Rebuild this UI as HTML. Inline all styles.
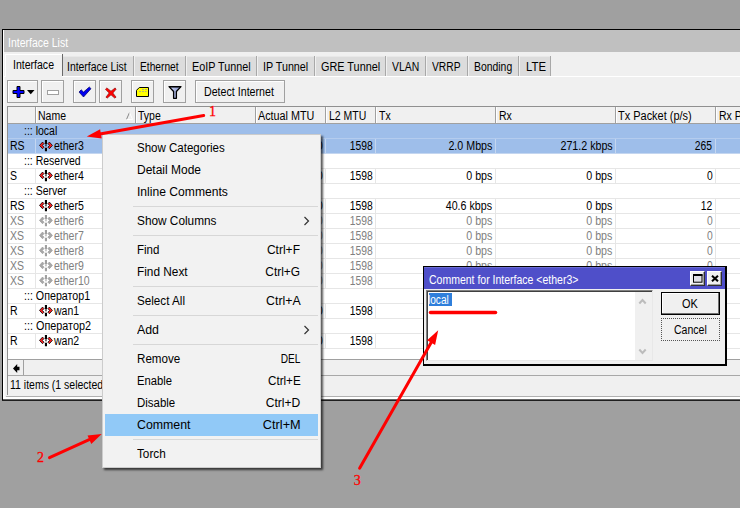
<!DOCTYPE html><html><head><meta charset="utf-8"><title>Interface List</title><style>
html,body{margin:0;padding:0}
body{width:740px;height:508px;overflow:hidden;background:#a0a0a0;position:relative;font:12px/14px "Liberation Sans","Noto Sans CJK SC",sans-serif;color:#000}
div,span,svg{position:absolute;box-sizing:border-box}
.t{white-space:nowrap;transform:scaleX(.875);transform-origin:0 0;line-height:14px;font-size:12px}
.m{white-space:nowrap;transform:scaleX(.96);transform-origin:0 0;line-height:14px;font-size:12px}
.n{white-space:nowrap;font:14px/14px "Liberation Serif",serif;color:#f00;-webkit-text-stroke:.3px #f00}
</style></head><body>
<div style="left:2px;top:29px;width:760px;height:371px;background:#000;"></div>
<div style="left:3px;top:30px;width:760px;height:370px;background:#f0f0f0;"></div>
<div style="left:3px;top:30px;width:1px;height:370px;background:#fff;"></div>
<div style="left:4px;top:52px;width:1px;height:348px;background:#f8f8f8;"></div>
<div style="left:7px;top:106px;width:1px;height:289px;background:#909090;"></div>
<div style="left:4px;top:30px;width:760px;height:22px;background:#c0c0c0;"></div>
<span class="t" style="top:36px;left:8px;color:#fff;">Interface List</span>
<div style="left:4px;top:52px;width:760px;height:25px;background:#f0f0f0;"></div>
<div style="left:4px;top:76px;width:760px;height:1px;background:#fff;"></div>
<div style="left:63px;top:56px;width:70px;height:20px;background:#dcdcdc;border-top:1px solid #e8e8e8;"></div>
<div style="left:133px;top:56px;width:1px;height:20px;background:#a8a8a8;"></div>
<span class="t" style="top:60px;left:67.3px;transform:scaleX(0.8675);">Interface List</span>
<div style="left:135px;top:56px;width:50px;height:20px;background:#dcdcdc;border-top:1px solid #e8e8e8;"></div>
<div style="left:185px;top:56px;width:1px;height:20px;background:#a8a8a8;"></div>
<span class="t" style="top:60px;left:140.4px;transform:scaleX(0.8507);">Ethernet</span>
<div style="left:187px;top:56px;width:69px;height:20px;background:#dcdcdc;border-top:1px solid #e8e8e8;"></div>
<div style="left:256px;top:56px;width:1px;height:20px;background:#a8a8a8;"></div>
<span class="t" style="top:60px;left:192px;transform:scaleX(0.8992);">EoIP Tunnel</span>
<div style="left:258px;top:56px;width:56px;height:20px;background:#dcdcdc;border-top:1px solid #e8e8e8;"></div>
<div style="left:314px;top:56px;width:1px;height:20px;background:#a8a8a8;"></div>
<span class="t" style="top:60px;left:262.9px;transform:scaleX(0.8953);">IP Tunnel</span>
<div style="left:316px;top:56px;width:69px;height:20px;background:#dcdcdc;border-top:1px solid #e8e8e8;"></div>
<div style="left:385px;top:56px;width:1px;height:20px;background:#a8a8a8;"></div>
<span class="t" style="top:60px;left:320.5px;transform:scaleX(0.9055);">GRE Tunnel</span>
<div style="left:387px;top:56px;width:38px;height:20px;background:#dcdcdc;border-top:1px solid #e8e8e8;"></div>
<div style="left:425px;top:56px;width:1px;height:20px;background:#a8a8a8;"></div>
<span class="t" style="top:60px;left:392.2px;transform:scaleX(0.8674);">VLAN</span>
<div style="left:427px;top:56px;width:40px;height:20px;background:#dcdcdc;border-top:1px solid #e8e8e8;"></div>
<div style="left:467px;top:56px;width:1px;height:20px;background:#a8a8a8;"></div>
<span class="t" style="top:60px;left:432.3px;transform:scaleX(0.8547);">VRRP</span>
<div style="left:469px;top:56px;width:49px;height:20px;background:#dcdcdc;border-top:1px solid #e8e8e8;"></div>
<div style="left:518px;top:56px;width:1px;height:20px;background:#a8a8a8;"></div>
<span class="t" style="top:60px;left:474.4px;transform:scaleX(0.8673);">Bonding</span>
<div style="left:520px;top:56px;width:30px;height:20px;background:#dcdcdc;border-top:1px solid #e8e8e8;"></div>
<div style="left:550px;top:56px;width:1px;height:20px;background:#a8a8a8;"></div>
<span class="t" style="top:60px;left:525.5px;transform:scaleX(0.9467);">LTE</span>
<div style="left:5px;top:54px;width:57px;height:23px;background:#f0f0f0;border-top:1px solid #fff;border-left:1px solid #fff;"></div>
<div style="left:62px;top:54px;width:1px;height:22px;background:#696969;"></div>
<span class="t" style="top:58px;left:13px;transform:scaleX(0.8779);">Interface</span>
<div style="left:7px;top:80px;width:31px;height:23px;background:#f0f0f0;border:1px solid #a0a0a0;box-shadow:inset 1px 1px 0 #fff;"></div>
<div style="left:41px;top:80px;width:23px;height:23px;background:#f0f0f0;border:1px solid #a0a0a0;box-shadow:inset 1px 1px 0 #fff;"></div>
<div style="left:73px;top:80px;width:23px;height:23px;background:#f0f0f0;border:1px solid #a0a0a0;box-shadow:inset 1px 1px 0 #fff;"></div>
<div style="left:99px;top:80px;width:23px;height:23px;background:#f0f0f0;border:1px solid #a0a0a0;box-shadow:inset 1px 1px 0 #fff;"></div>
<div style="left:131px;top:80px;width:23px;height:23px;background:#f0f0f0;border:1px solid #a0a0a0;box-shadow:inset 1px 1px 0 #fff;"></div>
<div style="left:163px;top:80px;width:23px;height:23px;background:#f0f0f0;border:1px solid #a0a0a0;box-shadow:inset 1px 1px 0 #fff;"></div>
<div style="left:195px;top:80px;width:90px;height:23px;background:#f0f0f0;border:1px solid #a0a0a0;box-shadow:inset 1px 1px 0 #fff;"></div>
<span class="t" style="top:85px;left:204.3px;transform:scaleX(0.888);">Detect Internet</span>
<svg style="left:12px;top:85px" width="26" height="14" viewBox="0 0 26 14"><path d="M5 1.500h3v4h4v3H8v4H5v-4H1v-3h4z" fill="#0000ff" stroke="#000" stroke-width="1"/><path d="M15 5h7.500l-3.750 4.300z" fill="#000"/></svg>
<svg style="left:47px;top:90px" width="12" height="6" viewBox="0 0 12 6"><rect x="0.5" y="0.5" width="11" height="4" fill="#fff" stroke="#a0a0a0"/></svg>
<svg style="left:78px;top:86px" width="14" height="12" viewBox="0 0 14 12"><path d="M1 6l2.200-2.200 2.300 2.300L11.300 1l1.700 1.700-7.500 8.300z" fill="#0000f0" stroke="#000060" stroke-width=".7"/></svg>
<svg style="left:104.5px;top:86.5px" width="12" height="12" viewBox="0 0 13 13"><path d="M2 1l4.5 3.5L11 1l1 1.5-3.5 4 3.5 4.500-1.5 1-4-3.500-4 3.500-1.500-1 3.500-4.500L.5 2.500z" fill="#ff0000" stroke="#800" stroke-width=".7"/></svg>
<svg style="left:136px;top:87px" width="13" height="10" viewBox="0 0 13 10"><path d="M3.3.5h9.2v9H.5V3.3z" fill="#ffff00" stroke="#000"/><path d="M6 2.5h2M9 2.5h2M3 4.500h2M6 4.500h2M9 4.500h1.500" stroke="#b0b080" stroke-width="1"/></svg>
<svg style="left:168px;top:85px" width="14" height="15" viewBox="0 0 14 15"><defs><linearGradient id="fg" x1="0" x2="1"><stop offset="0" stop-color="#d0d8f8"/><stop offset="1" stop-color="#8090c8"/></linearGradient></defs><path d="M1 1.600h12L8.400 6.500v6.800H5.600V6.500z" fill="url(#fg)" stroke="#000" stroke-width="1.300" stroke-linejoin="round"/><path d="M1 1.400h12v1H1z" fill="#000"/></svg>
<div style="left:7px;top:106px;width:760px;height:254px;background:#fff;border-left:1px solid #909090;border-top:1px solid #909090;"></div>
<div style="left:8px;top:107px;width:760px;height:16px;background:#f0f0f0;"></div>
<div style="left:8px;top:123px;width:760px;height:1px;background:#a0a0a0;"></div>
<div style="left:35px;top:107px;width:1px;height:16px;background:#a0a0a0;"></div>
<div style="left:36px;top:107px;width:1px;height:16px;background:#fff;"></div>
<span class="t" style="top:109px;left:38px;">Name</span>
<div style="left:135px;top:107px;width:1px;height:16px;background:#a0a0a0;"></div>
<div style="left:136px;top:107px;width:1px;height:16px;background:#fff;"></div>
<span class="t" style="top:109px;left:138px;">Type</span>
<div style="left:255px;top:107px;width:1px;height:16px;background:#a0a0a0;"></div>
<div style="left:256px;top:107px;width:1px;height:16px;background:#fff;"></div>
<span class="t" style="top:109px;left:257.9px;transform:scaleX(0.8997);">Actual MTU</span>
<div style="left:325px;top:107px;width:1px;height:16px;background:#a0a0a0;"></div>
<div style="left:326px;top:107px;width:1px;height:16px;background:#fff;"></div>
<span class="t" style="top:109px;left:328.5px;transform:scaleX(0.8738);">L2 MTU</span>
<div style="left:375px;top:107px;width:1px;height:16px;background:#a0a0a0;"></div>
<div style="left:376px;top:107px;width:1px;height:16px;background:#fff;"></div>
<span class="t" style="top:109px;left:378.5px;">Tx</span>
<div style="left:495px;top:107px;width:1px;height:16px;background:#a0a0a0;"></div>
<div style="left:496px;top:107px;width:1px;height:16px;background:#fff;"></div>
<span class="t" style="top:109px;left:498.5px;">Rx</span>
<div style="left:615px;top:107px;width:1px;height:16px;background:#a0a0a0;"></div>
<div style="left:616px;top:107px;width:1px;height:16px;background:#fff;"></div>
<span class="t" style="top:109px;left:618.4px;transform:scaleX(0.9134);">Tx Packet (p/s)</span>
<div style="left:715px;top:107px;width:1px;height:16px;background:#a0a0a0;"></div>
<div style="left:716px;top:107px;width:1px;height:16px;background:#fff;"></div>
<span class="t" style="top:109px;left:718.7px;">Rx P</span>
<svg style="left:125.500px;top:112px" width="7" height="8" viewBox="0 0 8 8" preserveAspectRatio="none"><path d="M.5 7.500L4 .5" stroke="#808080" fill="none"/><path d="M4 .5L7.500 7.500H.5" stroke="#fff" fill="none"/></svg>
<div style="left:8px;top:124px;width:760px;height:15px;background:#9ebeea;"></div>
<div style="left:8px;top:138px;width:760px;height:1px;background:#b4ccee;"></div>
<span class="t" style="top:124px;left:24.3px;">::: local</span>
<div style="left:8px;top:139px;width:760px;height:15px;background:#9ebeea;"></div>
<div style="left:8px;top:153px;width:760px;height:1px;background:#c4d6f0;"></div>
<div style="left:35px;top:139px;width:1px;height:14px;background:#c4d6f0;"></div>
<div style="left:135px;top:139px;width:1px;height:14px;background:#c4d6f0;"></div>
<div style="left:255px;top:139px;width:1px;height:14px;background:#c4d6f0;"></div>
<div style="left:325px;top:139px;width:1px;height:14px;background:#c4d6f0;"></div>
<div style="left:375px;top:139px;width:1px;height:14px;background:#c4d6f0;"></div>
<div style="left:495px;top:139px;width:1px;height:14px;background:#c4d6f0;"></div>
<div style="left:615px;top:139px;width:1px;height:14px;background:#c4d6f0;"></div>
<div style="left:715px;top:139px;width:1px;height:14px;background:#c4d6f0;"></div>
<span class="t" style="top:139px;left:10px;color:#000;">RS</span>
<svg style="left:39px;top:140px" width="15" height="12" viewBox="0 0 15 12"><path d="M.5 5.400L3.500 2.100 5 3.600 3.300 5.400 5 7.200 3.500 8.700z" fill="#ff2020" stroke="#000" stroke-width=".8" stroke-linejoin="round"/><path d="M13.400 5.400L10.400 2.100 8.900 3.600 10.600 5.400 8.900 7.200 10.400 8.700z" fill="#ff2020" stroke="#000" stroke-width=".8" stroke-linejoin="round"/><path d="M5.900 0h2.100v4.400h-2.100zM5.900 7.700h2.100v3.500h-2.100zM6.200 5.300h1.500v1h-1.500z" fill="#000"/></svg>
<span class="t" style="top:139px;left:54px;color:#000;">ether3</span>
<span class="t" style="top:139px;right:417.5px;transform-origin:100% 0;color:#000;transform:scaleX(0.86);">1500</span>
<span class="t" style="top:139px;right:367.5px;transform-origin:100% 0;color:#000;transform:scaleX(0.86);">1598</span>
<span class="t" style="top:139px;right:247.5px;transform-origin:100% 0;color:#000;transform:scaleX(0.89);">2.0 Mbps</span>
<span class="t" style="top:139px;right:127.5px;transform-origin:100% 0;color:#000;transform:scaleX(0.89);">271.2 kbps</span>
<span class="t" style="top:139px;right:27.5px;transform-origin:100% 0;color:#000;transform:scaleX(0.86);">265</span>
<div style="left:8px;top:168px;width:760px;height:1px;background:#e6e6e6;"></div>
<span class="t" style="top:154px;left:24.3px;">::: Reserved</span>
<div style="left:8px;top:183px;width:760px;height:1px;background:#e6e6e6;"></div>
<div style="left:35px;top:169px;width:1px;height:14px;background:#e6e6e6;"></div>
<div style="left:135px;top:169px;width:1px;height:14px;background:#e6e6e6;"></div>
<div style="left:255px;top:169px;width:1px;height:14px;background:#e6e6e6;"></div>
<div style="left:325px;top:169px;width:1px;height:14px;background:#e6e6e6;"></div>
<div style="left:375px;top:169px;width:1px;height:14px;background:#e6e6e6;"></div>
<div style="left:495px;top:169px;width:1px;height:14px;background:#e6e6e6;"></div>
<div style="left:615px;top:169px;width:1px;height:14px;background:#e6e6e6;"></div>
<div style="left:715px;top:169px;width:1px;height:14px;background:#e6e6e6;"></div>
<span class="t" style="top:169px;left:10px;color:#000;">S</span>
<svg style="left:39px;top:170px" width="15" height="12" viewBox="0 0 15 12"><path d="M.5 5.400L3.500 2.100 5 3.600 3.300 5.400 5 7.200 3.500 8.700z" fill="#ff2020" stroke="#000" stroke-width=".8" stroke-linejoin="round"/><path d="M13.400 5.400L10.400 2.100 8.900 3.600 10.600 5.400 8.900 7.200 10.400 8.700z" fill="#ff2020" stroke="#000" stroke-width=".8" stroke-linejoin="round"/><path d="M5.900 0h2.100v4.400h-2.100zM5.900 7.700h2.100v3.500h-2.100zM6.200 5.300h1.500v1h-1.500z" fill="#000"/></svg>
<span class="t" style="top:169px;left:54px;color:#000;">ether4</span>
<span class="t" style="top:169px;right:417.5px;transform-origin:100% 0;color:#000;transform:scaleX(0.86);">1500</span>
<span class="t" style="top:169px;right:367.5px;transform-origin:100% 0;color:#000;transform:scaleX(0.86);">1598</span>
<span class="t" style="top:169px;right:247.5px;transform-origin:100% 0;color:#000;transform:scaleX(0.89);">0 bps</span>
<span class="t" style="top:169px;right:127.5px;transform-origin:100% 0;color:#000;transform:scaleX(0.89);">0 bps</span>
<span class="t" style="top:169px;right:27.5px;transform-origin:100% 0;color:#000;transform:scaleX(0.86);">0</span>
<div style="left:8px;top:198px;width:760px;height:1px;background:#e6e6e6;"></div>
<span class="t" style="top:184px;left:24.3px;">::: Server</span>
<div style="left:8px;top:213px;width:760px;height:1px;background:#e6e6e6;"></div>
<div style="left:35px;top:199px;width:1px;height:14px;background:#e6e6e6;"></div>
<div style="left:135px;top:199px;width:1px;height:14px;background:#e6e6e6;"></div>
<div style="left:255px;top:199px;width:1px;height:14px;background:#e6e6e6;"></div>
<div style="left:325px;top:199px;width:1px;height:14px;background:#e6e6e6;"></div>
<div style="left:375px;top:199px;width:1px;height:14px;background:#e6e6e6;"></div>
<div style="left:495px;top:199px;width:1px;height:14px;background:#e6e6e6;"></div>
<div style="left:615px;top:199px;width:1px;height:14px;background:#e6e6e6;"></div>
<div style="left:715px;top:199px;width:1px;height:14px;background:#e6e6e6;"></div>
<span class="t" style="top:199px;left:10px;color:#000;">RS</span>
<svg style="left:39px;top:200px" width="15" height="12" viewBox="0 0 15 12"><path d="M.5 5.400L3.500 2.100 5 3.600 3.300 5.400 5 7.200 3.500 8.700z" fill="#ff2020" stroke="#000" stroke-width=".8" stroke-linejoin="round"/><path d="M13.400 5.400L10.400 2.100 8.900 3.600 10.600 5.400 8.900 7.200 10.400 8.700z" fill="#ff2020" stroke="#000" stroke-width=".8" stroke-linejoin="round"/><path d="M5.900 0h2.100v4.400h-2.100zM5.900 7.700h2.100v3.500h-2.100zM6.200 5.300h1.500v1h-1.500z" fill="#000"/></svg>
<span class="t" style="top:199px;left:54px;color:#000;">ether5</span>
<span class="t" style="top:199px;right:417.5px;transform-origin:100% 0;color:#000;transform:scaleX(0.86);">1500</span>
<span class="t" style="top:199px;right:367.5px;transform-origin:100% 0;color:#000;transform:scaleX(0.86);">1598</span>
<span class="t" style="top:199px;right:247.5px;transform-origin:100% 0;color:#000;transform:scaleX(0.89);">40.6 kbps</span>
<span class="t" style="top:199px;right:127.5px;transform-origin:100% 0;color:#000;transform:scaleX(0.89);">0 bps</span>
<span class="t" style="top:199px;right:27.5px;transform-origin:100% 0;color:#000;transform:scaleX(0.86);">12</span>
<div style="left:8px;top:228px;width:760px;height:1px;background:#e6e6e6;"></div>
<div style="left:35px;top:214px;width:1px;height:14px;background:#e6e6e6;"></div>
<div style="left:135px;top:214px;width:1px;height:14px;background:#e6e6e6;"></div>
<div style="left:255px;top:214px;width:1px;height:14px;background:#e6e6e6;"></div>
<div style="left:325px;top:214px;width:1px;height:14px;background:#e6e6e6;"></div>
<div style="left:375px;top:214px;width:1px;height:14px;background:#e6e6e6;"></div>
<div style="left:495px;top:214px;width:1px;height:14px;background:#e6e6e6;"></div>
<div style="left:615px;top:214px;width:1px;height:14px;background:#e6e6e6;"></div>
<div style="left:715px;top:214px;width:1px;height:14px;background:#e6e6e6;"></div>
<span class="t" style="top:214px;left:10px;color:#808080;">XS</span>
<svg style="left:39px;top:215px" width="15" height="12" viewBox="0 0 15 12"><path d="M.5 5.400L3.500 2.100 5 3.600 3.300 5.400 5 7.200 3.500 8.700z" fill="#a8a8a8" stroke="#a0a0a0" stroke-width=".8" stroke-linejoin="round"/><path d="M13.400 5.400L10.400 2.100 8.900 3.600 10.600 5.400 8.900 7.200 10.400 8.700z" fill="#a8a8a8" stroke="#a0a0a0" stroke-width=".8" stroke-linejoin="round"/><path d="M5.900 0h2.100v4.400h-2.100zM5.900 7.700h2.100v3.500h-2.100zM6.200 5.300h1.500v1h-1.500z" fill="#a0a0a0"/></svg>
<span class="t" style="top:214px;left:54px;color:#808080;">ether6</span>
<span class="t" style="top:214px;right:417.5px;transform-origin:100% 0;color:#808080;transform:scaleX(0.86);">1500</span>
<span class="t" style="top:214px;right:367.5px;transform-origin:100% 0;color:#808080;transform:scaleX(0.86);">1598</span>
<span class="t" style="top:214px;right:247.5px;transform-origin:100% 0;color:#808080;transform:scaleX(0.89);">0 bps</span>
<span class="t" style="top:214px;right:127.5px;transform-origin:100% 0;color:#808080;transform:scaleX(0.89);">0 bps</span>
<span class="t" style="top:214px;right:27.5px;transform-origin:100% 0;color:#808080;transform:scaleX(0.86);">0</span>
<div style="left:8px;top:243px;width:760px;height:1px;background:#e6e6e6;"></div>
<div style="left:35px;top:229px;width:1px;height:14px;background:#e6e6e6;"></div>
<div style="left:135px;top:229px;width:1px;height:14px;background:#e6e6e6;"></div>
<div style="left:255px;top:229px;width:1px;height:14px;background:#e6e6e6;"></div>
<div style="left:325px;top:229px;width:1px;height:14px;background:#e6e6e6;"></div>
<div style="left:375px;top:229px;width:1px;height:14px;background:#e6e6e6;"></div>
<div style="left:495px;top:229px;width:1px;height:14px;background:#e6e6e6;"></div>
<div style="left:615px;top:229px;width:1px;height:14px;background:#e6e6e6;"></div>
<div style="left:715px;top:229px;width:1px;height:14px;background:#e6e6e6;"></div>
<span class="t" style="top:229px;left:10px;color:#808080;">XS</span>
<svg style="left:39px;top:230px" width="15" height="12" viewBox="0 0 15 12"><path d="M.5 5.400L3.500 2.100 5 3.600 3.300 5.400 5 7.200 3.500 8.700z" fill="#a8a8a8" stroke="#a0a0a0" stroke-width=".8" stroke-linejoin="round"/><path d="M13.400 5.400L10.400 2.100 8.900 3.600 10.600 5.400 8.900 7.200 10.400 8.700z" fill="#a8a8a8" stroke="#a0a0a0" stroke-width=".8" stroke-linejoin="round"/><path d="M5.900 0h2.100v4.400h-2.100zM5.900 7.700h2.100v3.500h-2.100zM6.200 5.300h1.500v1h-1.500z" fill="#a0a0a0"/></svg>
<span class="t" style="top:229px;left:54px;color:#808080;">ether7</span>
<span class="t" style="top:229px;right:417.5px;transform-origin:100% 0;color:#808080;transform:scaleX(0.86);">1500</span>
<span class="t" style="top:229px;right:367.5px;transform-origin:100% 0;color:#808080;transform:scaleX(0.86);">1598</span>
<span class="t" style="top:229px;right:247.5px;transform-origin:100% 0;color:#808080;transform:scaleX(0.89);">0 bps</span>
<span class="t" style="top:229px;right:127.5px;transform-origin:100% 0;color:#808080;transform:scaleX(0.89);">0 bps</span>
<span class="t" style="top:229px;right:27.5px;transform-origin:100% 0;color:#808080;transform:scaleX(0.86);">0</span>
<div style="left:8px;top:258px;width:760px;height:1px;background:#e6e6e6;"></div>
<div style="left:35px;top:244px;width:1px;height:14px;background:#e6e6e6;"></div>
<div style="left:135px;top:244px;width:1px;height:14px;background:#e6e6e6;"></div>
<div style="left:255px;top:244px;width:1px;height:14px;background:#e6e6e6;"></div>
<div style="left:325px;top:244px;width:1px;height:14px;background:#e6e6e6;"></div>
<div style="left:375px;top:244px;width:1px;height:14px;background:#e6e6e6;"></div>
<div style="left:495px;top:244px;width:1px;height:14px;background:#e6e6e6;"></div>
<div style="left:615px;top:244px;width:1px;height:14px;background:#e6e6e6;"></div>
<div style="left:715px;top:244px;width:1px;height:14px;background:#e6e6e6;"></div>
<span class="t" style="top:244px;left:10px;color:#808080;">XS</span>
<svg style="left:39px;top:245px" width="15" height="12" viewBox="0 0 15 12"><path d="M.5 5.400L3.500 2.100 5 3.600 3.300 5.400 5 7.200 3.500 8.700z" fill="#a8a8a8" stroke="#a0a0a0" stroke-width=".8" stroke-linejoin="round"/><path d="M13.400 5.400L10.400 2.100 8.900 3.600 10.600 5.400 8.900 7.200 10.400 8.700z" fill="#a8a8a8" stroke="#a0a0a0" stroke-width=".8" stroke-linejoin="round"/><path d="M5.900 0h2.100v4.400h-2.100zM5.900 7.700h2.100v3.500h-2.100zM6.200 5.300h1.500v1h-1.500z" fill="#a0a0a0"/></svg>
<span class="t" style="top:244px;left:54px;color:#808080;">ether8</span>
<span class="t" style="top:244px;right:417.5px;transform-origin:100% 0;color:#808080;transform:scaleX(0.86);">1500</span>
<span class="t" style="top:244px;right:367.5px;transform-origin:100% 0;color:#808080;transform:scaleX(0.86);">1598</span>
<span class="t" style="top:244px;right:247.5px;transform-origin:100% 0;color:#808080;transform:scaleX(0.89);">0 bps</span>
<span class="t" style="top:244px;right:127.5px;transform-origin:100% 0;color:#808080;transform:scaleX(0.89);">0 bps</span>
<span class="t" style="top:244px;right:27.5px;transform-origin:100% 0;color:#808080;transform:scaleX(0.86);">0</span>
<div style="left:8px;top:273px;width:760px;height:1px;background:#e6e6e6;"></div>
<div style="left:35px;top:259px;width:1px;height:14px;background:#e6e6e6;"></div>
<div style="left:135px;top:259px;width:1px;height:14px;background:#e6e6e6;"></div>
<div style="left:255px;top:259px;width:1px;height:14px;background:#e6e6e6;"></div>
<div style="left:325px;top:259px;width:1px;height:14px;background:#e6e6e6;"></div>
<div style="left:375px;top:259px;width:1px;height:14px;background:#e6e6e6;"></div>
<div style="left:495px;top:259px;width:1px;height:14px;background:#e6e6e6;"></div>
<div style="left:615px;top:259px;width:1px;height:14px;background:#e6e6e6;"></div>
<div style="left:715px;top:259px;width:1px;height:14px;background:#e6e6e6;"></div>
<span class="t" style="top:259px;left:10px;color:#808080;">XS</span>
<svg style="left:39px;top:260px" width="15" height="12" viewBox="0 0 15 12"><path d="M.5 5.400L3.500 2.100 5 3.600 3.300 5.400 5 7.200 3.500 8.700z" fill="#a8a8a8" stroke="#a0a0a0" stroke-width=".8" stroke-linejoin="round"/><path d="M13.400 5.400L10.400 2.100 8.900 3.600 10.600 5.400 8.900 7.200 10.400 8.700z" fill="#a8a8a8" stroke="#a0a0a0" stroke-width=".8" stroke-linejoin="round"/><path d="M5.900 0h2.100v4.400h-2.100zM5.900 7.700h2.100v3.500h-2.100zM6.200 5.300h1.500v1h-1.500z" fill="#a0a0a0"/></svg>
<span class="t" style="top:259px;left:54px;color:#808080;">ether9</span>
<span class="t" style="top:259px;right:417.5px;transform-origin:100% 0;color:#808080;transform:scaleX(0.86);">1500</span>
<span class="t" style="top:259px;right:367.5px;transform-origin:100% 0;color:#808080;transform:scaleX(0.86);">1598</span>
<span class="t" style="top:259px;right:247.5px;transform-origin:100% 0;color:#808080;transform:scaleX(0.89);">0 bps</span>
<span class="t" style="top:259px;right:127.5px;transform-origin:100% 0;color:#808080;transform:scaleX(0.89);">0 bps</span>
<span class="t" style="top:259px;right:27.5px;transform-origin:100% 0;color:#808080;transform:scaleX(0.86);">0</span>
<div style="left:8px;top:288px;width:760px;height:1px;background:#e6e6e6;"></div>
<div style="left:35px;top:274px;width:1px;height:14px;background:#e6e6e6;"></div>
<div style="left:135px;top:274px;width:1px;height:14px;background:#e6e6e6;"></div>
<div style="left:255px;top:274px;width:1px;height:14px;background:#e6e6e6;"></div>
<div style="left:325px;top:274px;width:1px;height:14px;background:#e6e6e6;"></div>
<div style="left:375px;top:274px;width:1px;height:14px;background:#e6e6e6;"></div>
<div style="left:495px;top:274px;width:1px;height:14px;background:#e6e6e6;"></div>
<div style="left:615px;top:274px;width:1px;height:14px;background:#e6e6e6;"></div>
<div style="left:715px;top:274px;width:1px;height:14px;background:#e6e6e6;"></div>
<span class="t" style="top:274px;left:10px;color:#808080;">XS</span>
<svg style="left:39px;top:275px" width="15" height="12" viewBox="0 0 15 12"><path d="M.5 5.400L3.500 2.100 5 3.600 3.300 5.400 5 7.200 3.500 8.700z" fill="#a8a8a8" stroke="#a0a0a0" stroke-width=".8" stroke-linejoin="round"/><path d="M13.400 5.400L10.400 2.100 8.900 3.600 10.600 5.400 8.900 7.200 10.400 8.700z" fill="#a8a8a8" stroke="#a0a0a0" stroke-width=".8" stroke-linejoin="round"/><path d="M5.900 0h2.100v4.400h-2.100zM5.900 7.700h2.100v3.500h-2.100zM6.200 5.300h1.500v1h-1.500z" fill="#a0a0a0"/></svg>
<span class="t" style="top:274px;left:54px;color:#808080;">ether10</span>
<span class="t" style="top:274px;right:417.5px;transform-origin:100% 0;color:#808080;transform:scaleX(0.86);">1500</span>
<span class="t" style="top:274px;right:367.5px;transform-origin:100% 0;color:#808080;transform:scaleX(0.86);">1598</span>
<span class="t" style="top:274px;right:247.5px;transform-origin:100% 0;color:#808080;transform:scaleX(0.89);">0 bps</span>
<span class="t" style="top:274px;right:127.5px;transform-origin:100% 0;color:#808080;transform:scaleX(0.89);">0 bps</span>
<span class="t" style="top:274px;right:27.5px;transform-origin:100% 0;color:#808080;transform:scaleX(0.86);">0</span>
<div style="left:8px;top:303px;width:760px;height:1px;background:#e6e6e6;"></div>
<span class="t" style="top:289px;left:24.3px;transform:scaleX(0.8895);">::: Оператор1</span>
<div style="left:8px;top:318px;width:760px;height:1px;background:#e6e6e6;"></div>
<div style="left:35px;top:304px;width:1px;height:14px;background:#e6e6e6;"></div>
<div style="left:135px;top:304px;width:1px;height:14px;background:#e6e6e6;"></div>
<div style="left:255px;top:304px;width:1px;height:14px;background:#e6e6e6;"></div>
<div style="left:325px;top:304px;width:1px;height:14px;background:#e6e6e6;"></div>
<div style="left:375px;top:304px;width:1px;height:14px;background:#e6e6e6;"></div>
<div style="left:495px;top:304px;width:1px;height:14px;background:#e6e6e6;"></div>
<div style="left:615px;top:304px;width:1px;height:14px;background:#e6e6e6;"></div>
<div style="left:715px;top:304px;width:1px;height:14px;background:#e6e6e6;"></div>
<span class="t" style="top:304px;left:10px;color:#000;">R</span>
<svg style="left:39px;top:305px" width="15" height="12" viewBox="0 0 15 12"><path d="M.5 5.400L3.500 2.100 5 3.600 3.300 5.400 5 7.200 3.500 8.700z" fill="#ff2020" stroke="#000" stroke-width=".8" stroke-linejoin="round"/><path d="M13.400 5.400L10.400 2.100 8.900 3.600 10.600 5.400 8.900 7.200 10.400 8.700z" fill="#ff2020" stroke="#000" stroke-width=".8" stroke-linejoin="round"/><path d="M5.900 0h2.100v4.400h-2.100zM5.900 7.700h2.100v3.500h-2.100zM6.200 5.300h1.500v1h-1.500z" fill="#000"/></svg>
<span class="t" style="top:304px;left:54px;color:#000;">wan1</span>
<span class="t" style="top:304px;right:417.5px;transform-origin:100% 0;color:#000;transform:scaleX(0.86);">1500</span>
<span class="t" style="top:304px;right:367.5px;transform-origin:100% 0;color:#000;transform:scaleX(0.86);">1598</span>
<span class="t" style="top:304px;right:247.5px;transform-origin:100% 0;color:#000;transform:scaleX(0.89);">0 bps</span>
<span class="t" style="top:304px;right:127.5px;transform-origin:100% 0;color:#000;transform:scaleX(0.89);">0 bps</span>
<span class="t" style="top:304px;right:27.5px;transform-origin:100% 0;color:#000;transform:scaleX(0.86);">0</span>
<div style="left:8px;top:333px;width:760px;height:1px;background:#e6e6e6;"></div>
<span class="t" style="top:319px;left:24.3px;transform:scaleX(0.9016);">::: Оператор2</span>
<div style="left:8px;top:348px;width:760px;height:1px;background:#e6e6e6;"></div>
<div style="left:35px;top:334px;width:1px;height:14px;background:#e6e6e6;"></div>
<div style="left:135px;top:334px;width:1px;height:14px;background:#e6e6e6;"></div>
<div style="left:255px;top:334px;width:1px;height:14px;background:#e6e6e6;"></div>
<div style="left:325px;top:334px;width:1px;height:14px;background:#e6e6e6;"></div>
<div style="left:375px;top:334px;width:1px;height:14px;background:#e6e6e6;"></div>
<div style="left:495px;top:334px;width:1px;height:14px;background:#e6e6e6;"></div>
<div style="left:615px;top:334px;width:1px;height:14px;background:#e6e6e6;"></div>
<div style="left:715px;top:334px;width:1px;height:14px;background:#e6e6e6;"></div>
<span class="t" style="top:334px;left:10px;color:#000;">R</span>
<svg style="left:39px;top:335px" width="15" height="12" viewBox="0 0 15 12"><path d="M.5 5.400L3.500 2.100 5 3.600 3.300 5.400 5 7.200 3.500 8.700z" fill="#ff2020" stroke="#000" stroke-width=".8" stroke-linejoin="round"/><path d="M13.400 5.400L10.400 2.100 8.900 3.600 10.600 5.400 8.900 7.200 10.400 8.700z" fill="#ff2020" stroke="#000" stroke-width=".8" stroke-linejoin="round"/><path d="M5.900 0h2.100v4.400h-2.100zM5.900 7.700h2.100v3.500h-2.100zM6.200 5.300h1.500v1h-1.500z" fill="#000"/></svg>
<span class="t" style="top:334px;left:54px;color:#000;">wan2</span>
<span class="t" style="top:334px;right:417.5px;transform-origin:100% 0;color:#000;transform:scaleX(0.86);">1500</span>
<span class="t" style="top:334px;right:367.5px;transform-origin:100% 0;color:#000;transform:scaleX(0.86);">1598</span>
<span class="t" style="top:334px;right:247.5px;transform-origin:100% 0;color:#000;transform:scaleX(0.89);">0 bps</span>
<span class="t" style="top:334px;right:127.5px;transform-origin:100% 0;color:#000;transform:scaleX(0.89);">0 bps</span>
<span class="t" style="top:334px;right:27.5px;transform-origin:100% 0;color:#000;transform:scaleX(0.86);">0</span>
<div style="left:8px;top:359px;width:760px;height:1px;background:#a0a0a0;"></div>
<div style="left:8px;top:360px;width:760px;height:15px;background:#f0f0f0;"></div>
<div style="left:8px;top:360px;width:16px;height:15px;background:#f0f0f0;border-right:1px solid #a0a0a0;"></div>
<svg style="left:12.8px;top:363.5px" width="7" height="9" viewBox="0 0 7 9"><path d="M0 4.5L4.2 0v2.800h2.300v3.400H4.200V9z" fill="#000"/></svg>
<div style="left:8px;top:375px;width:760px;height:1px;background:#a8a8a8;"></div>
<div style="left:8px;top:376px;width:760px;height:19px;background:#f0f0f0;"></div>
<span class="t" style="top:378px;left:10.3px;">11 items (1 selected)</span>
<div style="left:6px;top:396px;width:760px;height:1px;background:#b0b0b0;"></div>
<div style="left:3px;top:397px;width:760px;height:3px;background:#fff;"></div>
<svg style="left:0;top:395px" width="740" height="8" viewBox="0 0 740 8"><rect x="2" y="4.400" width="740" height="1.400" fill="#000"/></svg>
<div style="left:102px;top:134px;width:219px;height:334px;background:#f2f2f2;border:1px solid #ccc;box-shadow:2px 2px 2px rgba(0,0,0,.65)"></div>
<span class="m" style="top:141px;left:137.2px;transform:scaleX(0.9596);">Show Categories</span>
<span class="m" style="top:163px;left:137.2px;transform:scaleX(0.9995);">Detail Mode</span>
<span class="m" style="top:185px;left:137.2px;transform:scaleX(1.0095);">Inline Comments</span>
<div style="left:133px;top:206px;width:185px;height:1px;background:#d7d7d7;"></div>
<span class="m" style="top:214px;left:137.2px;transform:scaleX(0.9851);">Show Columns</span>
<svg style="left:303px;top:216px" width="7" height="10" viewBox="0 0 7 10"><path d="M1.5 1L5.5 5 1.5 9" stroke="#333" fill="none" stroke-width="1.2"/></svg>
<div style="left:133px;top:235px;width:185px;height:1px;background:#d7d7d7;"></div>
<span class="m" style="top:243px;left:137.2px;transform:scaleX(0.9596);">Find</span>
<span class="m" style="top:243px;right:439.8px;transform-origin:100% 0;transform:scaleX(1.003);">Ctrl+F</span>
<span class="m" style="top:265px;left:137.2px;transform:scaleX(0.9852);">Find Next</span>
<span class="m" style="top:265px;right:439.8px;transform-origin:100% 0;transform:scaleX(0.991);">Ctrl+G</span>
<div style="left:133px;top:286px;width:185px;height:1px;background:#d7d7d7;"></div>
<span class="m" style="top:294px;left:137.2px;transform:scaleX(0.9725);">Select All</span>
<span class="m" style="top:294px;right:439.8px;transform-origin:100% 0;transform:scaleX(1.0271);">Ctrl+A</span>
<div style="left:133px;top:315px;width:185px;height:1px;background:#d7d7d7;"></div>
<span class="m" style="top:323px;left:137.2px;transform:scaleX(1.03);">Add</span>
<svg style="left:303px;top:325px" width="7" height="10" viewBox="0 0 7 10"><path d="M1.5 1L5.5 5 1.5 9" stroke="#333" fill="none" stroke-width="1.2"/></svg>
<div style="left:133px;top:344px;width:185px;height:1px;background:#d7d7d7;"></div>
<span class="m" style="top:352px;left:137.2px;transform:scaleX(0.969);">Remove</span>
<span class="m" style="top:352px;right:439.8px;transform-origin:100% 0;transform:scaleX(0.8439);">DEL</span>
<span class="m" style="top:374px;left:137.2px;transform:scaleX(0.9365);">Enable</span>
<span class="m" style="top:374px;right:439.8px;transform-origin:100% 0;transform:scaleX(0.9707);">Ctrl+E</span>
<span class="m" style="top:396px;left:137.2px;transform:scaleX(0.9543);">Disable</span>
<span class="m" style="top:396px;right:439.8px;transform-origin:100% 0;transform:scaleX(1.0075);">Ctrl+D</span>
<div style="left:105px;top:414px;width:213px;height:22px;background:#91c9f7;"></div>
<span class="m" style="top:418px;left:137.2px;transform:scaleX(1.0285);">Comment</span>
<span class="m" style="top:418px;right:439.8px;transform-origin:100% 0;transform:scaleX(1.0597);">Ctrl+M</span>
<div style="left:133px;top:439px;width:185px;height:1px;background:#d7d7d7;"></div>
<span class="m" style="top:447px;left:137.2px;transform:scaleX(0.9781);">Torch</span>
<div style="left:423px;top:266px;width:304px;height:100px;background:#000;"></div>
<div style="left:424px;top:267px;width:301px;height:97px;background:#f0f0f0;"></div>
<div style="left:424px;top:267px;width:301px;height:22px;background:#4f4fc9;"></div>
<div style="left:424px;top:267px;width:301px;height:1px;background:#6c6cd6;"></div>
<span class="t" style="top:273px;left:428.5px;color:#fff;">Comment for Interface &lt;ether3&gt;</span>
<div style="left:690px;top:271px;width:15px;height:15px;background:#f0f0f0;border:1px solid #303030;border-top-color:#fff;border-left-color:#fff;box-shadow:inset -1px -1px 0 #a0a0a0"></div>
<div style="left:707px;top:271px;width:15px;height:15px;background:#f0f0f0;border:1px solid #303030;border-top-color:#fff;border-left-color:#fff;box-shadow:inset -1px -1px 0 #a0a0a0"></div>
<svg style="left:693px;top:273.5px" width="10" height="9" viewBox="0 0 10 9"><rect x=".5" y="1" width="8.500" height="7.200" fill="#e0e0e8" stroke="#000"/><rect x="0" y="0" width="9.500" height="2" fill="#000"/></svg>
<svg style="left:710.5px;top:275px" width="8" height="7" viewBox="0 0 8 7"><path d="M1 .7L7 6.300M7 .7L1 6.300" stroke="#000" stroke-width="2"/></svg>
<div style="left:426px;top:290px;width:227px;height:71px;background:#fff;border:1px solid #808080;border-right-color:#e8e8e8;border-bottom-color:#e8e8e8;box-shadow:inset 1px 1px 0 #404040"></div>
<div style="left:635px;top:292px;width:17px;height:68px;background:#f0f0f0;"></div>
<svg style="left:638px;top:297px" width="9" height="8" viewBox="0 0 9 8"><path d="M1.300 6.500L4.500 3 7.700 6.500" stroke="#bcbcbc" fill="none" stroke-width="2"/></svg>
<svg style="left:638px;top:348px" width="9" height="8" viewBox="0 0 9 8"><path d="M1.300 1.500L4.500 5 7.700 1.500" stroke="#bcbcbc" fill="none" stroke-width="2"/></svg>
<div style="left:429px;top:293px;width:23px;height:13px;background:#2f7fdb;"></div>
<span class="t" style="top:293px;left:428.3px;color:#fff;transform:scaleX(0.8425);">local</span>
<div style="left:661px;top:292px;width:59px;height:23px;background:#f0f0f0;border:1px solid #000;box-shadow:inset -1px -1px 0 #707070,inset 1px 1px 0 #fff;"></div>
<span class="t" style="top:297px;left:682.4px;transform:scaleX(0.911);">OK</span>
<div style="left:661px;top:318px;width:59px;height:23px;background:#f0f0f0;border:1px dotted #555;"></div>
<span class="t" style="top:323px;left:673.5px;transform:scaleX(0.878);">Cancel</span>
<svg style="left:0;top:0" width="740" height="508" viewBox="0 0 740 508"><path d="M203.7 115.4L99.9 134.0" stroke="#f00" stroke-width="3" stroke-linecap="round" fill="none"/><path d="M86.8 136.4L100.1 129.3L101.7 138.4z" fill="#f00"/><path d="M49.5 457.7L90.3 439.2" stroke="#f00" stroke-width="3" stroke-linecap="round" fill="none"/><path d="M101.7 434.1L91.3 443.9L87.5 435.5z" fill="#f00"/><path d="M359.6 468.2L431.6 341.8" stroke="#f00" stroke-width="3" stroke-linecap="round" fill="none"/><path d="M438.2 330.2L435.1 344.9L427.1 340.3z" fill="#f00"/><path d="M430.500 312.400H495.500" stroke="#f00" stroke-width="3.500" stroke-linecap="round" fill="none"/></svg>
<span class="n" style="left:209px;top:105px">1</span>
<span class="n" style="left:37px;top:451px">2</span>
<span class="n" style="left:353.700px;top:474px">3</span>
</body></html>
